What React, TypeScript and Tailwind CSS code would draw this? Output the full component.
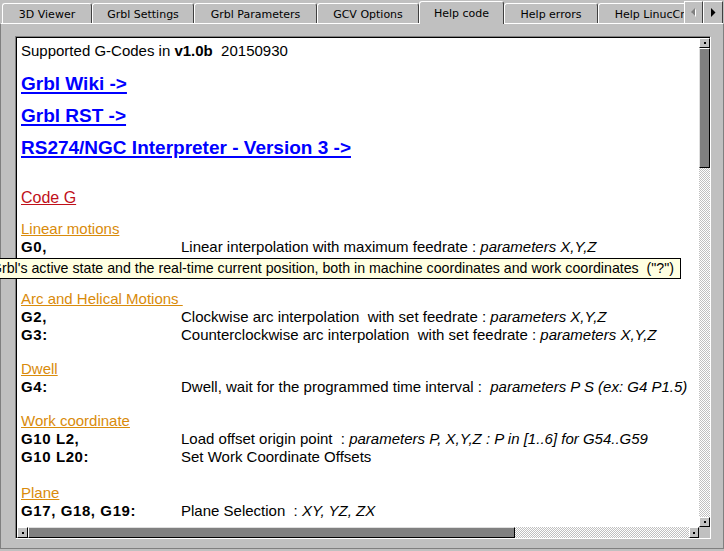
import React from 'react';

type Tab = { label: string; w: string; active?: boolean };

const tabs: Tab[] = [
  { label: '3D Viewer', w: 'w-[90px]' },
  { label: 'Grbl Settings', w: 'w-[102px]' },
  { label: 'Grbl Parameters', w: 'w-[123px]' },
  { label: 'GCV Options', w: 'w-[102px]' },
  { label: 'Help code', w: 'w-[85px]', active: true },
  { label: 'Help errors', w: 'w-[94px]' },
  { label: 'Help LinucCnc', w: 'w-[112px]' },
];

type Line = { code: string; text: string; em?: string };

const sections: { title: string; mt: string; lines: Line[] }[] = [
  {
    title: 'Linear motions',
    mt: 'mt-[12px]',
    lines: [
      { code: 'G0,', text: 'Linear interpolation with maximum feedrate : ', em: 'parameters X,Y,Z' },
      // second line sits under the tooltip
      { code: '', text: '' },
    ],
  },
  {
    title: 'Arc and Helical Motions ',
    mt: 'mt-[16px]',
    lines: [
      { code: 'G2,', text: 'Clockwise arc interpolation  with set feedrate : ', em: 'parameters X,Y,Z' },
      { code: 'G3:', text: 'Counterclockwise arc interpolation  with set feedrate : ', em: 'parameters X,Y,Z' },
    ],
  },
  {
    title: 'Dwell',
    mt: 'mt-[16px]',
    lines: [
      { code: 'G4:', text: 'Dwell, wait for the programmed time interval :  ', em: 'parameters P S (ex: G4 P1.5)' },
    ],
  },
  {
    title: 'Work coordinate',
    mt: 'mt-[16px]',
    lines: [
      { code: 'G10 L2,', text: 'Load offset origin point  : ', em: 'parameters P, X,Y,Z : P in [1..6] for G54..G59' },
      { code: 'G10 L20:', text: 'Set Work Coordinate Offsets' },
    ],
  },
  {
    title: 'Plane',
    mt: 'mt-[18px]',
    lines: [{ code: 'G17, G18, G19:', text: 'Plane Selection  : ', em: 'XY, YZ, ZX' }],
  },
];

const checker =
  'bg-[image:repeating-conic-gradient(#c0c0c0_0_25%,#ffffff_0_50%)] bg-[length:2px_2px]';

// tiny square scroll button, dot in the middle
const ScrollButton = ({ className }: { className: string }) => (
  <div
    className={`bg-[#c0c0c0] border-t border-l border-t-white border-l-white border-r border-b border-r-black border-b-black flex items-center justify-center ${className}`}
  >
    <div className="w-[2px] h-[2px] bg-black" />
  </div>
);

const Arrow = ({ dir, enabled }: { dir: 'left' | 'right'; enabled: boolean }) => (
  <div className="h-[23px] bg-[#c0c0c0] border-t border-l border-t-white border-l-white border-r border-b border-r-[#404040] border-b-[#404040] flex items-center justify-center w-[20px]">
    <svg width="5" height="9" viewBox="0 0 5 9">
      {dir === 'left' ? (
        <>
          <path d="M5 1 L5 9 L1 5 Z" fill="#ffffff" />
          <path d="M4 0 L4 8 L0 4 Z" fill={enabled ? '#000' : '#808080'} />
        </>
      ) : (
        <path d="M0 0 L0 9 L4.5 4.5 Z" fill="#000" />
      )}
    </svg>
  </div>
);

const App: React.FC = () => {
  return (
    <div className="w-[724px] h-[551px] bg-[#c0c0c0] relative overflow-hidden flex flex-col font-['Liberation_Sans',Arial,sans-serif] text-black">
      {/* tab strip */}
      <div className="h-[24px] flex shrink-0">
        <div className="w-[684px] overflow-hidden flex items-end pl-[2px] font-['DejaVu_Sans',sans-serif] text-[11px] text-black">
          {tabs.map(t => (
            <div
              key={t.label}
              className={`${t.w} shrink-0 flex items-center justify-center whitespace-nowrap rounded-t-[3px] bg-[#c0c0c0] border-t border-l border-t-white border-l-white border-r border-r-[#404040] ${
                t.active ? 'h-[23px] relative z-10 pt-[2px]' : 'h-[20px] mb-[1px] pt-[3px]'
              }`}
            >
              {t.label}
            </div>
          ))}
        </div>
        <div className="flex pt-[1px]">
          <div className="w-[19px] flex">
            <Arrow dir="left" enabled={false} />
          </div>
          <Arrow dir="right" enabled />
        </div>
      </div>

      {/* tab page */}
      <div className="flex-1 -mt-[1px] mb-[2px] border-t border-t-white border-l border-l-[#808080] border-r border-r-[#808080] border-b border-b-[#808080] pl-[14px] pt-[12px]">
        <div className="w-[696px] h-[503px] border-t border-l border-t-[#808080] border-l-[#808080] border-r border-b border-r-white border-b-white">
          <div className="w-full h-full border-t border-l border-black grid grid-cols-[1fr_11px] grid-rows-[1fr_11px] bg-white">
            {/* document */}
            <div className="overflow-hidden pl-[4px] pt-[4px] text-[15px] leading-[18px]">
              <p className="whitespace-pre">
                Supported G-Codes in <b>v1.0b</b>  20150930
              </p>

              <div className="mt-[8px] text-[19px] leading-[32px] font-bold text-[#0000ff]">
                <div><span className="underline decoration-[2px] underline-offset-[2px]">Grbl Wiki -&gt;</span></div>
                <div><span className="underline decoration-[2px] underline-offset-[2px]">Grbl RST -&gt;</span></div>
                <div><span className="underline decoration-[2px] underline-offset-[2px]">RS274/NGC Interpreter - Version 3 -&gt;</span></div>
              </div>

              <div className="mt-[24px] text-[16px] leading-[20px] text-[#c0101a]">
                <span className="underline">Code G</span>
              </div>

              {sections.map(s => (
                <div key={s.title} className={s.mt}>
                  <div className="text-[#d98b0b] whitespace-pre">
                    <span className="underline">{s.title}</span>
                  </div>
                  {s.lines.map((l, i) => (
                    <div key={i} className="flex whitespace-pre h-[18px]">
                      <span className="w-[160px] shrink-0 font-bold tracking-[0.6px]">{l.code}</span>
                      <span>
                        {l.text}
                        {l.em && <i>{l.em}</i>}
                      </span>
                    </div>
                  ))}
                </div>
              ))}
            </div>

            {/* vertical scrollbar */}
            <div className="flex flex-col">
              <ScrollButton className="h-[10px]" />
              <div className="h-[120px] bg-[#808080] border-t border-l border-t-white border-l-[#dfdfdf] border-r border-b border-black" />
              <div className={`flex-1 ${checker}`} />
              <ScrollButton className="h-[10px]" />
            </div>

            {/* horizontal scrollbar */}
            <div className="flex">
              <ScrollButton className="w-[11px]" />
              <div className="w-[487px] bg-[#808080] border-t border-l border-t-[#dfdfdf] border-l-white border-r border-b border-black" />
              <div className={`flex-1 ${checker}`} />
              <ScrollButton className="w-[10px]" />
            </div>
            <div className="bg-[#c0c0c0]" />
          </div>
        </div>
      </div>

      {/* hover tooltip */}
      <div className="absolute top-[258px] right-[43px] h-[21px] bg-[#ffffe1] border border-black whitespace-pre text-[14.2px] leading-[19px] pl-[3px] pr-[6px]">
        Grbl's active state and the real-time current position, both in machine coordinates and work coordinates  ("?")
      </div>
    </div>
  );
};

export default App;
